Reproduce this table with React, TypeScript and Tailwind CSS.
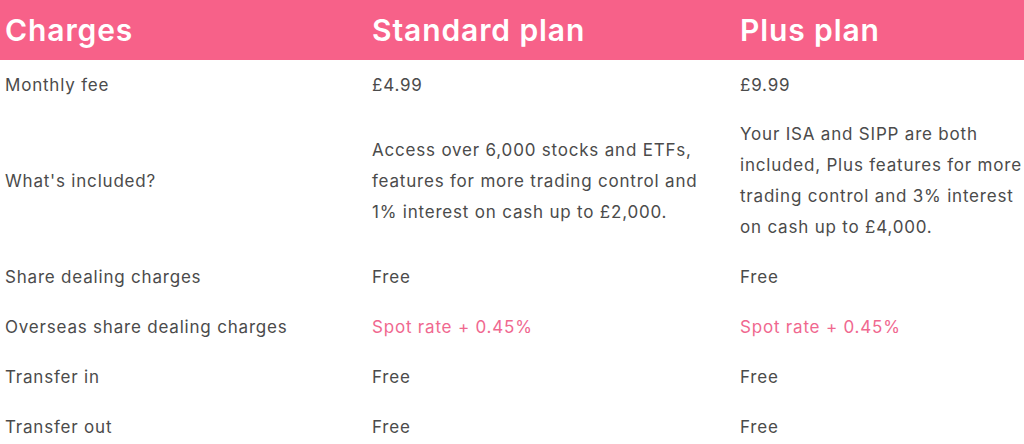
const rows: { label: string; standard: string; plus: string; pink?: boolean }[] = [
  { label: 'Monthly fee', standard: '£4.99', plus: '£9.99' },
  {
    label: "What's included?",
    standard: 'Access over 6,000 stocks and ETFs, features for more trading control and 1% interest on cash up to £2,000.',
    plus: 'Your ISA and SIPP are both included, Plus features for more trading control and 3% interest on cash up to £4,000.',
  },
  { label: 'Share dealing charges', standard: 'Free', plus: 'Free' },
  { label: 'Overseas share dealing charges', standard: 'Spot rate + 0.45%', plus: 'Spot rate + 0.45%', pink: true },
  { label: 'Transfer in', standard: 'Free', plus: 'Free' },
  { label: 'Transfer out', standard: 'Free', plus: 'Free' },
]

export default function App() {
  return (
    <div className="w-[1024px] h-[444px] overflow-hidden bg-white" style={{ fontFamily: 'Inter, "Noto Sans", sans-serif' }}>
      <div className="grid grid-cols-[367px_368px_1fr] h-[60px] items-center bg-[#f76189] pl-[5px] text-white text-[30px] tracking-[0.9px] font-semibold">
        <div>Charges</div>
        <div>Standard plan</div>
        <div>Plus plan</div>
      </div>
      {rows.map((r) => (
        <div
          key={r.label}
          className="grid grid-cols-[367px_368px_1fr] min-h-[50px] items-center py-[9px] pl-[5px] text-[17px] tracking-[0.8px] leading-[31px] text-[#4b4b4b]"
        >
          <div>{r.label}</div>
          <div className={`pr-[30px] ${r.pink ? 'text-[#f0688f]' : ''}`}>{r.standard}</div>
          <div className={r.pink ? 'text-[#f0688f]' : ''}>{r.plus}</div>
        </div>
      ))}
    </div>
  )
}
